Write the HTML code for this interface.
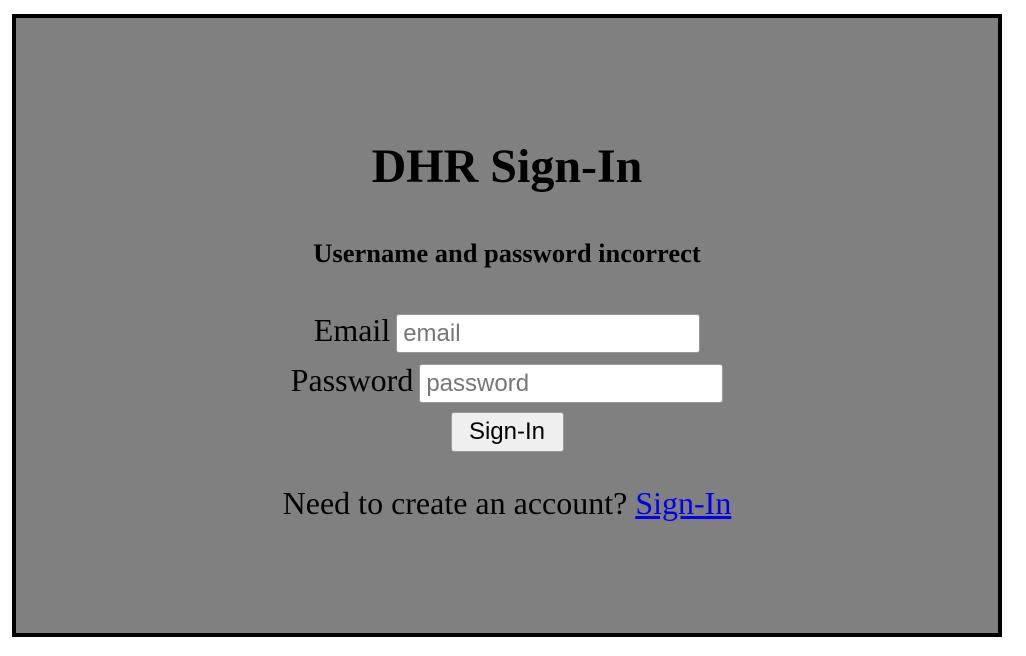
<!DOCTYPE html>
<html><head><style>
html,body{margin:0;padding:0;background:#fff;width:1026px;height:656px;overflow:hidden}
.box{position:absolute;left:12px;top:14px;width:982px;height:615px;border:4px solid #000;background:#808080;font-family:"Liberation Serif",serif;color:#000}
.row{position:absolute;left:0;width:982px;text-align:center;white-space:nowrap}
h1{margin:0;font-size:48px;font-weight:bold;line-height:56px}
.sub{font-size:26.5px;font-weight:bold;line-height:30px}
.lbl{font-size:32px;line-height:40px}
input{box-sizing:border-box;height:39px;width:304px;border:1px solid #999;border-radius:3px;background:#fff;font-family:"Liberation Sans",sans-serif;font-size:24px;padding:0 6px;vertical-align:middle;margin-left:6px}
input::placeholder{color:#777}
button{box-sizing:border-box;height:40px;width:113px;border:1px solid #999;border-radius:3px;background:#efefef;font-family:"Liberation Sans",sans-serif;font-size:24px;padding:0;color:#000}
a{color:#0000ee}
</style></head><body>
<div class="box">
<div class="row" style="top:121px"><h1>DHR Sign-In</h1></div>
<div class="row sub" style="top:220px">Username and password incorrect</div>
<div class="row lbl" style="top:292px">Email<input placeholder="email"></div>
<div class="row lbl" style="top:342px">Password<input placeholder="password"></div>
<div class="row" style="top:394px;left:0px"><button>Sign-In</button></div>
<div class="row lbl" style="top:465px">Need to create an account? <a href="#">Sign-In</a></div>
</div>
</body></html>
